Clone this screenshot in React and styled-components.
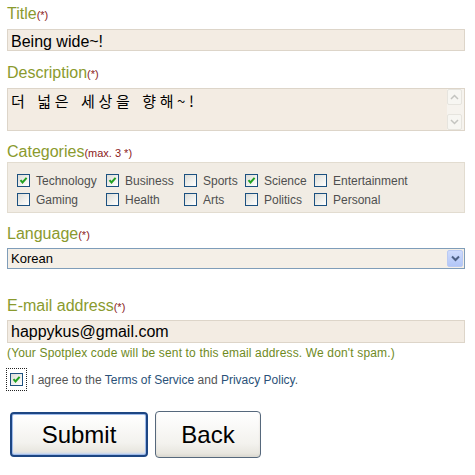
import React from 'react';
import styled, { createGlobalStyle } from 'styled-components';

const GlobalStyle = createGlobalStyle`
  html, body {
    margin: 0;
    padding: 0;
    background: #fff;
    font-family: "Liberation Sans", Arial, sans-serif;
  }
`;

const categories = [
  { name: 'Technology', checked: true },
  { name: 'Business', checked: true },
  { name: 'Sports', checked: false },
  { name: 'Science', checked: true },
  { name: 'Entertainment', checked: false },
  { name: 'Gaming', checked: false },
  { name: 'Health', checked: false },
  { name: 'Arts', checked: false },
  { name: 'Politics', checked: false },
  { name: 'Personal', checked: false },
];

function CheckBox({ checked }) {
  return (
    <Box>
      {checked && (
        <svg width="11" height="11" viewBox="0 0 11 11">
          <path d="M2.5 5.2 L4.5 7.4 L8.6 2.8" fill="none" stroke="#21a121" strokeWidth="2" />
        </svg>
      )}
    </Box>
  );
}

function App() {
  return (
    <>
      <GlobalStyle />
      <Form>
        <Label $mt={4}>
          Title<Req>(*)</Req>
        </Label>
        <TextInput type="text" defaultValue="Being wide~!" $mt={5} $h={22} $pt={3} readOnly />

        <Label $mt={12}>
          Description<Req>(*)</Req>
        </Label>
        <TextAreaBox>
          <TextArea defaultValue="더 넓은 세상을 향해~!" readOnly />
          <ScrollBar>
            <ScrollButton>
              <svg width="9" height="6" viewBox="0 0 9 6">
                <path d="M1 5 L4.5 1.5 L8 5" fill="none" stroke="#c4c4c0" strokeWidth="1.5" />
              </svg>
            </ScrollButton>
            <ScrollButton>
              <svg width="9" height="6" viewBox="0 0 9 6">
                <path d="M1 1 L4.5 4.5 L8 1" fill="none" stroke="#c4c4c0" strokeWidth="1.5" />
              </svg>
            </ScrollButton>
          </ScrollBar>
        </TextAreaBox>

        <Label $mt={11}>
          Categories<Req>(max. 3 *)</Req>
        </Label>
        <CategoryBox>
          {categories.map((c) => (
            <CategoryItem key={c.name}>
              <CheckBox checked={c.checked} />
              <span>{c.name}</span>
            </CategoryItem>
          ))}
        </CategoryBox>

        <Label $mt={11}>
          Language<Req>(*)</Req>
        </Label>
        <Select>
          <span>Korean</span>
          <DropButton>
            <svg width="9" height="7" viewBox="0 0 9 7">
              <path d="M1 1.5 L4.5 5 L8 1.5" fill="none" stroke="#4d6185" strokeWidth="2" />
            </svg>
          </DropButton>
        </Select>

        <Label $mt={27}>
          E-mail address<Req>(*)</Req>
        </Label>
        <TextInput type="text" defaultValue="happykus@gmail.com" $mt={4} $h={23} $pt={0} readOnly />
        <Note>(Your Spotplex code will be sent to this email address. We don't spam.)</Note>

        <AgreeRow>
          <FocusRing>
            <CheckBox checked />
          </FocusRing>
          <span>
            I agree to the <Link href="#">Terms of Service</Link> and <Link href="#">Privacy Policy</Link>.
          </span>
        </AgreeRow>

        <ButtonRow>
          <Button $primary>Submit</Button>
          <Button>Back</Button>
        </ButtonRow>
      </Form>
    </>
  );
}

export default App;

const Form = styled.form`
  display: flex;
  flex-direction: column;
  width: 458px;
  padding: 0 0 0 7px;
`;

const Label = styled.div`
  margin-top: ${({ $mt }) => $mt}px;
  height: 20px;
  font-size: 16px;
  line-height: 20px;
  color: #8a9a2e;
`;

const Req = styled.span`
  font-size: 11px;
  color: #8b2222;
`;

const TextInput = styled.input`
  box-sizing: border-box;
  margin: ${({ $mt }) => $mt}px 0 0;
  width: 458px;
  height: ${({ $h }) => $h}px;
  padding: ${({ $pt }) => $pt}px 3px 0;
  border: 1px solid #ddd5c9;
  background: #f3ece3;
  font-family: "Liberation Sans", Arial, sans-serif;
  font-size: 16px;
  color: #000;
  outline: none;
`;

const TextAreaBox = styled.div`
  box-sizing: border-box;
  margin-top: 5px;
  width: 458px;
  height: 43px;
  display: flex;
  border: 1px solid #ddd5c9;
  background: #f3ece3;
`;

const TextArea = styled.textarea`
  flex: 1;
  border: none;
  background: transparent;
  resize: none;
  padding: 3px 3px;
  margin: 0;
  font-family: "Noto Sans CJK KR", sans-serif;
  font-size: 15px;
  line-height: 18px;
  letter-spacing: 3.6px;
  word-spacing: 2px;
  color: #000;
  outline: none;
  overflow: hidden;
`;

const ScrollBar = styled.div`
  width: 16px;
  display: flex;
  flex-direction: column;
  justify-content: space-between;
  padding: 0 1px 0 0;
  background: #f6f3ee;
`;

const ScrollButton = styled.div`
  box-sizing: border-box;
  width: 15px;
  height: 16px;
  display: flex;
  align-items: center;
  justify-content: center;
  border: 1px solid #e6e4de;
  border-radius: 2px;
  background: #f7f6f2;
`;

const CategoryBox = styled.div`
  box-sizing: border-box;
  width: 458px;
  height: 51px;
  padding: 8px 9px 3px;
  display: grid;
  grid-template-columns: 89px 78px 61px 69px auto;
  grid-auto-rows: 19px;
  border: 1px solid #e2dcd0;
  background: #f1ece4;
`;

const CategoryItem = styled.label`
  display: flex;
  align-items: center;
  gap: 6px;
  font-size: 12px;
  color: #4f4f4f;
  white-space: nowrap;
`;

const Box = styled.span`
  box-sizing: border-box;
  width: 13px;
  height: 13px;
  flex: none;
  display: flex;
  align-items: center;
  justify-content: center;
  border: 1px solid #1c5180;
  background: linear-gradient(135deg, #dcdcd7 0%, #f2f2ef 60%, #ffffff 100%);
`;

const Select = styled.div`
  box-sizing: border-box;
  margin-top: 4px;
  width: 458px;
  height: 21px;
  display: flex;
  align-items: center;
  justify-content: space-between;
  padding: 0 1px 0 3px;
  border: 1px solid #7f9db9;
  background: #f4efe7;
  font-size: 13px;
  color: #000;
`;

const DropButton = styled.span`
  box-sizing: border-box;
  width: 16px;
  height: 17px;
  display: flex;
  align-items: center;
  justify-content: center;
  border-radius: 2px;
  border: 1px solid #bacaf3;
  background: linear-gradient(#cfdcfd, #b2c6f7);
`;

const Note = styled.div`
  margin-top: 3px;
  font-size: 12px;
  letter-spacing: 0.15px;
  line-height: 14px;
  color: #6f8a1e;
  white-space: nowrap;
`;

const AgreeRow = styled.div`
  margin-top: 8px;
  display: flex;
  align-items: center;
  gap: 4px;
  font-size: 12px;
  color: #555;
`;

const FocusRing = styled.span`
  display: flex;
  padding: 4px 3px;
  margin-left: -1px;
  border: 1px dotted #222;
`;

const Link = styled.a`
  color: #2a5178;
  text-decoration: none;
`;

const ButtonRow = styled.div`
  margin-top: 20px;
  margin-left: 3px;
  display: flex;
  align-items: center;
  gap: 7px;
`;

const Button = styled.button`
  box-sizing: border-box;
  width: ${({ $primary }) => ($primary ? 138 : 106)}px;
  height: ${({ $primary }) => ($primary ? 45 : 47)}px;
  padding: 0;
  font-family: "Liberation Sans", Arial, sans-serif;
  font-size: 24px;
  color: #000;
  border-radius: 4px;
  border: ${({ $primary }) => ($primary ? '2px solid #1d4683' : '1px solid #56687c')};
  box-shadow: ${({ $primary }) =>
    $primary ? 'inset 0 0 0 1px #9fbbea, inset 0 -2px 2px #c4d5f2' : 'inset 0 -2px 2px #dcdad2'};
  background: linear-gradient(#ffffff, #f3f2ee 70%, #e4e2da);
  cursor: pointer;
`;
